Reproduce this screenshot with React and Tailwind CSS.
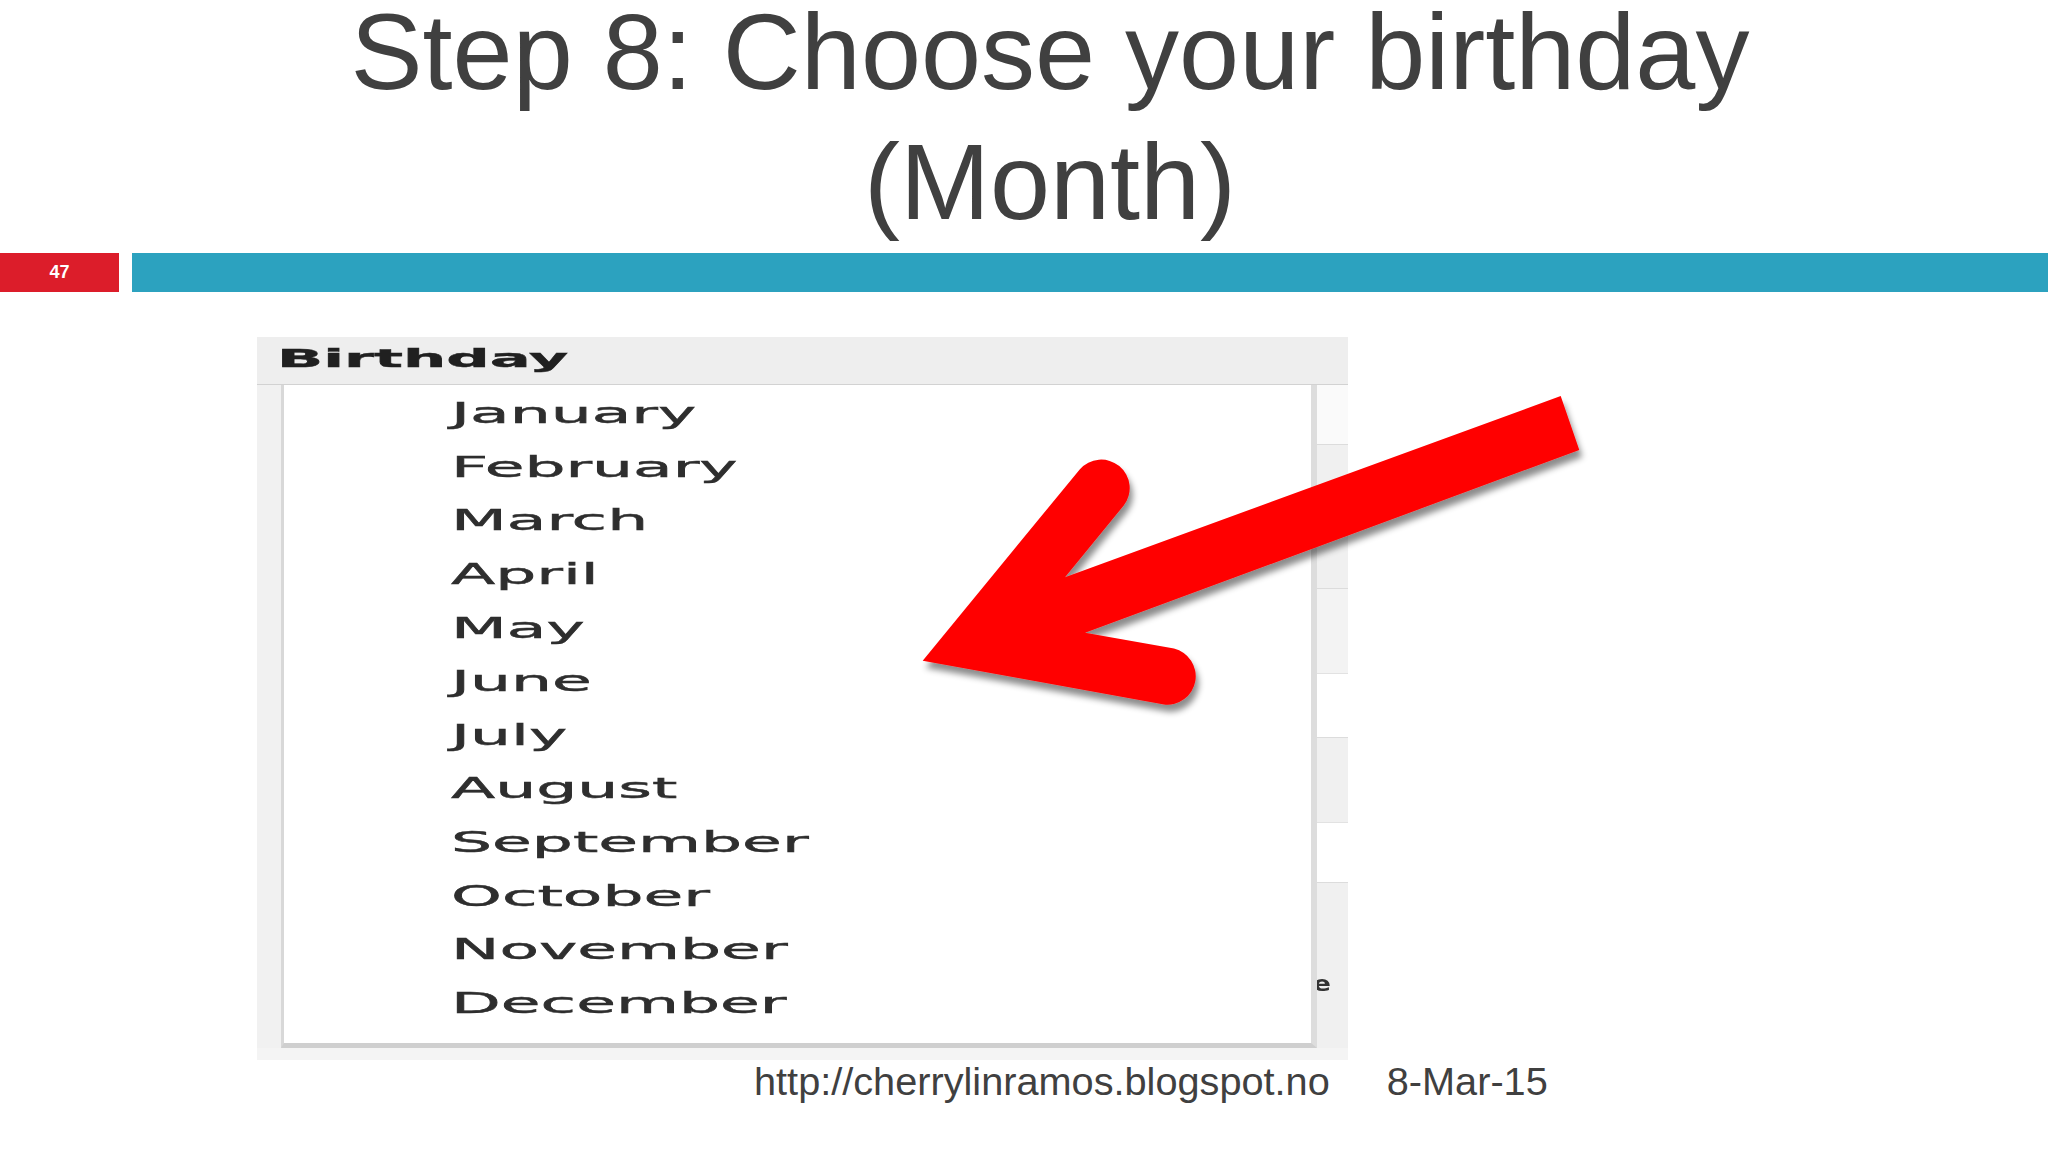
import React from "react";

const months = [
  "January",
  "February",
  "March",
  "April",
  "May",
  "June",
  "July",
  "August",
  "September",
  "October",
  "November",
  "December",
];

function Arrow() {
  return (
    <svg
      className="absolute left-0 top-0 pointer-events-none"
      width="2048"
      height="1152"
      viewBox="0 0 2048 1152"
    >
      <defs>
        <filter id="arrowShadow" x="-10%" y="-10%" width="130%" height="130%">
          <feDropShadow dx="3" dy="7" stdDeviation="3" floodColor="#000" floodOpacity="0.45" />
        </filter>
      </defs>
      <path
        filter="url(#arrowShadow)"
        fill="#ff0000"
        d="M 1560.7 396 L 1065 577.3 L 1123.7 505.6 A 28.5 28.5 0 0 0 1079.7 469.4 L 922.7 660.7 L 1164 704.5 A 28.5 28.5 0 0 0 1174 648.5 L 1085 632.7 L 1579.3 450 Z"
      />
    </svg>
  );
}

export default function App() {
  return (
    <div className="relative w-[2048px] h-[1152px] bg-white overflow-hidden font-['Liberation_Sans',Arial,sans-serif]">
      {/* Title */}
      <div className="mt-[-13px] h-[266px] pl-[52px] text-center text-[108px] leading-[1.2] text-[#404040]">
        <div>Step 8: Choose your birthday</div>
        <div>(Month)</div>
      </div>

      {/* Bar */}
      <div className="flex h-[39px]">
        <div className="w-[119px] bg-[#dc1d2a] flex items-center justify-center text-white text-[18px] font-bold">
          47
        </div>
        <div className="ml-[13px] flex-1 bg-[#2ca2bf]" />
      </div>

      {/* Screenshot */}
      <div className="mt-[45px] ml-[257px] w-[1091px] h-[723px] bg-[#f2f2f2] flex flex-col">
        <div className="h-[48px] bg-[#eeeeee] border-b border-[#d2d2d2] pl-[20px] font-['DejaVu_Sans',sans-serif] font-bold text-[25.5px] leading-[42px] text-[#202020] [-webkit-text-stroke:0.4px_#202020]">
          <span className="inline-block origin-left scale-x-[2.38]">Birthday</span>
        </div>
        <div className="flex h-[663px]">
          <div className="w-[24px] bg-[#f1f1f1]" />
          <div className="w-[1036px] bg-white border-l-[3px] border-r-[6px] border-b-[5px] border-l-[#d8d8d8] border-r-[#dddddd] border-b-[#cfcfcf] pt-[2px] pl-[167px] font-['DejaVu_Sans',sans-serif] text-[28px] leading-[53.64px] text-[#2e2e2e] [-webkit-text-stroke:0.45px_#2e2e2e]">
            {months.map((m) => (
              <div key={m} className="h-[53.64px]">
                <span className="inline-block origin-left scale-x-[2.31]">{m}</span>
              </div>
            ))}
          </div>
          <div className="w-[31px] flex flex-col bg-white">
            <div className="h-[59px] bg-[#fafafa]" />
            <div className="h-[144px] bg-[#f0f0f0] border-t border-[#dcdcdc]" />
            <div className="h-[85px] bg-[#f3f3f3] border-t border-[#dcdcdc]" />
            <div className="h-[64px] bg-white border-t border-[#e2e2e2]" />
            <div className="h-[85px] bg-[#f0f0f0] border-t border-[#dcdcdc]" />
            <div className="h-[60px] bg-white border-t border-[#e2e2e2]" />
            <div className="flex-1 bg-[#f0f0f0] border-t border-[#dcdcdc] overflow-hidden">
              <div className="mt-[90px] -ml-[4px] font-['DejaVu_Sans',sans-serif] font-bold text-[22px] leading-[22px] text-[#333]">
                <span className="inline-block origin-left scale-x-[1.2]">e</span>
              </div>
            </div>
          </div>
        </div>
        <div className="flex-1 bg-[#f4f4f4]" />
      </div>

      {/* Footer */}
      <div className="mt-[1.5px] pl-[754px] flex text-[39.7px] leading-[39.5px] text-[#404040]">
        <span>http://cherrylinramos.blogspot.no</span>
        <span className="ml-[57px]">8-Mar-15</span>
      </div>

      <Arrow />
    </div>
  );
}
